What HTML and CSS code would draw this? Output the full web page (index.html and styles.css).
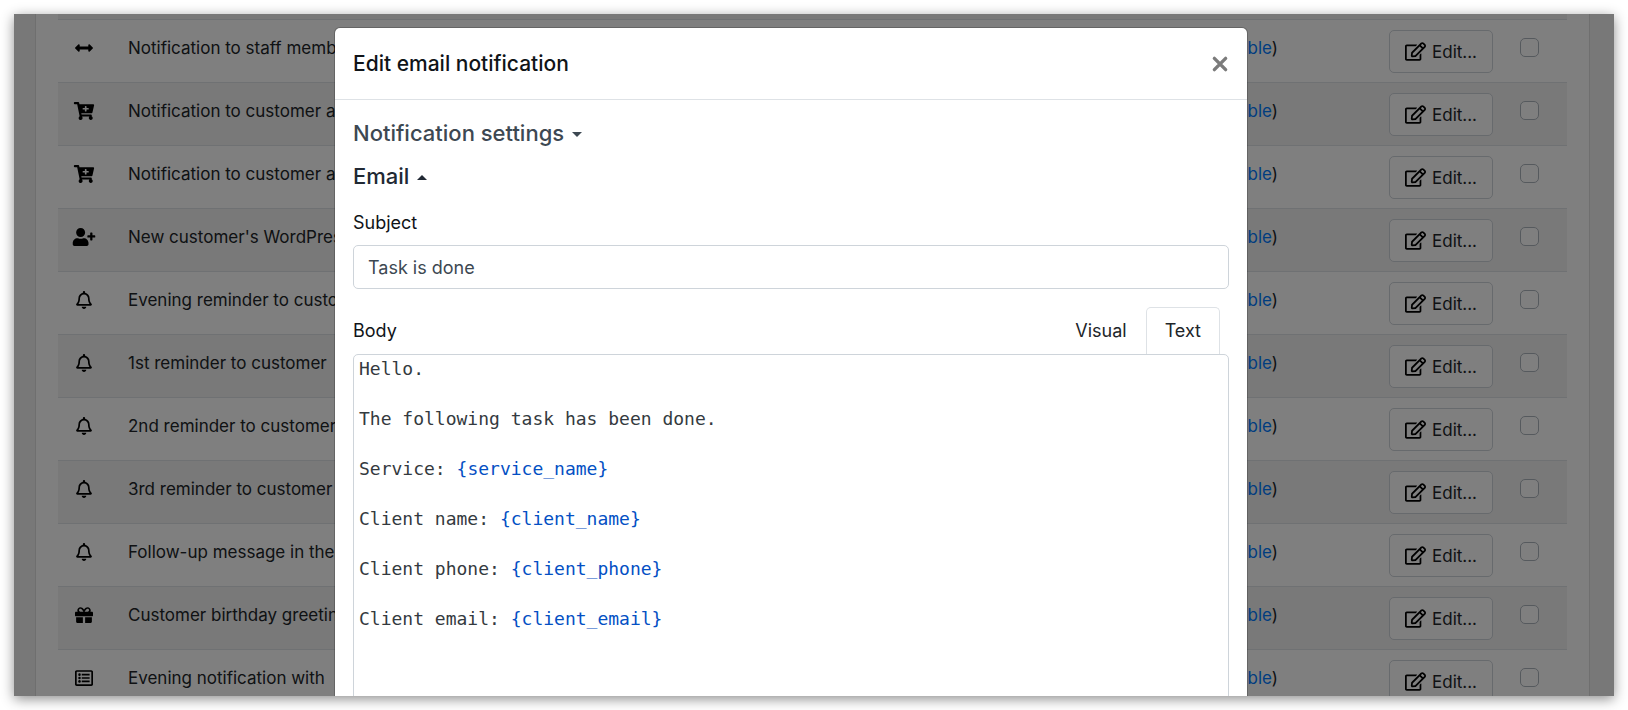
FILE: index.html
```
<!DOCTYPE html>
<html lang="en">
<head>
	<meta charset="UTF-8">
	<title>Email notifications</title>
	<link rel="stylesheet" href="styles.css">
</head>
<body>
<svg class="sprite">
	<symbol id="arrows" viewBox="0 0 512 512"><path d="M377.941 169.941V216H134.059v-46.059c0-21.382-25.851-32.09-40.971-16.971L7.029 239.029c-9.373 9.373-9.373 24.568 0 33.941l86.059 86.059c15.119 15.119 40.971 4.411 40.971-16.971V296h243.882v46.059c0 21.382 25.851 32.09 40.971 16.971l86.059-86.059c9.373-9.373 9.373-24.568 0-33.941l-86.059-86.059c-15.119-15.12-40.971-4.412-40.971 16.97z"/></symbol>
	<symbol id="cart" viewBox="0 0 576 512"><path d="M504.717 320H211.572l6.545 32h268.418c15.401 0 26.816 14.301 23.403 29.319l-5.517 24.276C523.112 414.668 536 433.828 536 456c0 31.202-25.519 56.444-56.824 55.994-29.823-.429-54.35-24.631-55.155-54.447-.44-16.287 6.085-31.049 16.803-41.548H231.176C241.553 426.165 248 440.326 248 456c0 31.813-26.528 57.431-58.67 55.938-28.54-1.325-51.751-24.385-53.251-52.917-1.158-22.034 10.436-41.455 28.051-51.586L93.883 64H24C10.745 64 0 53.255 0 40V24C0 10.745 10.745 0 24 0h102.529c11.401 0 21.228 8.021 23.513 19.19L159.208 64H551.99c15.401 0 26.816 14.301 23.403 29.319l-47.273 208C525.637 312.246 515.923 320 504.717 320zM408 168h-48v-40c0-8.837-7.163-16-16-16h-16c-8.837 0-16 7.163-16 16v40h-48c-8.837 0-16 7.163-16 16v16c0 8.837 7.163 16 16 16h48v40c0 8.837 7.163 16 16 16h16c8.837 0 16-7.163 16-16v-40h48c8.837 0 16-7.163 16-16v-16c0-8.837-7.163-16-16-16z"/></symbol>
	<symbol id="user" viewBox="0 0 640 512"><path d="M624 208h-64v-64c0-8.8-7.2-16-16-16h-32c-8.8 0-16 7.2-16 16v64h-64c-8.8 0-16 7.2-16 16v32c0 8.8 7.2 16 16 16h64v64c0 8.8 7.2 16 16 16h32c8.8 0 16-7.2 16-16v-64h64c8.8 0 16-7.2 16-16v-32c0-8.8-7.2-16-16-16zm-400 48c70.7 0 128-57.3 128-128S294.7 0 224 0 96 57.3 96 128s57.3 128 128 128zm89.6 32h-16.7c-22.2 10.2-46.9 16-72.9 16s-50.6-5.8-72.9-16h-16.7C60.2 288 0 348.2 0 422.4V464c0 26.5 21.5 48 48 48h352c26.5 0 48-21.5 48-48v-41.6c0-74.2-60.2-134.4-134.4-134.4z"/></symbol>
	<symbol id="bell" viewBox="0 0 448 512"><path d="M439.39 362.29c-19.32-20.76-55.47-51.99-55.47-154.29 0-77.7-54.48-139.9-127.94-155.16V32c0-17.67-14.32-32-31.98-32s-31.98 14.33-31.98 32v20.84C118.56 68.1 64.08 130.3 64.08 208c0 102.3-36.15 133.53-55.47 154.29-6 6.45-8.66 14.16-8.61 21.71.11 16.4 12.98 32 32.1 32h383.8c19.12 0 32-15.6 32.1-32 .05-7.55-2.61-15.27-8.61-21.71zM67.53 368c21.22-27.97 44.42-74.33 44.53-159.42 0-.2-.06-.38-.06-.58 0-61.86 50.14-112 112-112s112 50.14 112 112c0 .2-.06.38-.06.58.11 85.1 23.31 131.46 44.53 159.42H67.53zM224 512c35.32 0 63.97-28.65 63.97-64H160.03c0 35.35 28.65 64 63.97 64z"/></symbol>
	<symbol id="gift" viewBox="0 0 512 512"><path d="M32 448c0 17.7 14.3 32 32 32h160V320H32v128zm256 32h160c17.7 0 32-14.3 32-32V320H288v160zm192-320h-42.1c6.2-12.1 10.1-25.5 10.1-40 0-48.5-39.5-88-88-88-41.6 0-68.5 21.3-103 68.3-34.5-47-61.4-68.3-103-68.3-48.5 0-88 39.5-88 88 0 14.5 3.8 27.9 10.1 40H32c-17.7 0-32 14.3-32 32v80c0 8.8 7.2 16 16 16h480c8.8 0 16-7.2 16-16v-80c0-17.7-14.3-32-32-32zm-326.1 0c-22.1 0-40-17.9-40-40s17.9-40 40-40c19.9 0 34.6 3.3 86.1 80h-86.1zm206.1 0h-86.1c51.4-76.5 65.7-80 86.1-80 22.1 0 40 17.9 40 40s-17.9 40-40 40z"/></symbol>
	<symbol id="list" viewBox="0 0 512 512"><path d="M464 32H48C21.49 32 0 53.49 0 80v352c0 26.51 21.49 48 48 48h416c26.51 0 48-21.49 48-48V80c0-26.51-21.49-48-48-48zm-6 400H54a6 6 0 0 1-6-6V86a6 6 0 0 1 6-6h404a6 6 0 0 1 6 6v340a6 6 0 0 1-6 6z"/><path d="M192 136h224v48H192zM192 232h224v48H192zM192 328h224v48H192z"/><circle cx="128" cy="160" r="36"/><circle cx="128" cy="256" r="36"/><circle cx="128" cy="352" r="36"/></symbol>
	<symbol id="edit" viewBox="0 0 576 512"><path d="M402.3 344.9l32-32c5-5 13.7-1.5 13.7 5.7V464c0 26.5-21.5 48-48 48H48c-26.5 0-48-21.5-48-48V112c0-26.5 21.5-48 48-48h273.5c7.1 0 10.7 8.6 5.7 13.7l-32 32c-1.5 1.5-3.5 2.3-5.7 2.3H48v352h352V350.5c0-2.1.8-4.1 2.3-5.6zm156.6-201.8L296.3 405.7l-90.4 10c-26.2 2.9-48.5-19.2-45.6-45.6l10-90.4L432.9 17.1c22.9-22.9 59.9-22.9 82.7 0l43.2 43.2c22.9 22.9 22.9 60 .1 82.8zM460.1 174L402 115.9 216.2 301.8l-7.3 65.3 65.3-7.3L460.1 174zm64.8-79.7l-43.2-43.2c-4.1-4.1-10.8-4.1-14.8 0L436 82l58.1 58.1 30.9-30.9c4-4.2 4-10.8-.1-14.9z"/></symbol>
</svg>

<div class="screen">
	<div class="card">
		<table class="list">
			<colgroup>
				<col class="col-type">
				<col>
				<col class="col-state">
				<col class="col-action">
				<col class="col-check">
			</colgroup>
			<tbody>
			<tr class="row-cut"><td colspan="5"></td></tr>
			<tr>
				<td class="type"><svg class="icon"><use href="#arrows"/></svg></td>
				<td>Notification to staff member</td>
				<td class="state"><a href="#">disable</a>)</td>
				<td class="action"><button type="button" class="btn"><svg class="icon-edit"><use href="#edit"/></svg>Edit...</button></td>
				<td class="check"><input type="checkbox" aria-label="Select"></td>
			</tr>
			<tr>
				<td class="type"><svg class="icon"><use href="#cart"/></svg></td>
				<td>Notification to customer a</td>
				<td class="state"><a href="#">disable</a>)</td>
				<td class="action"><button type="button" class="btn"><svg class="icon-edit"><use href="#edit"/></svg>Edit...</button></td>
				<td class="check"><input type="checkbox" aria-label="Select"></td>
			</tr>
			<tr>
				<td class="type"><svg class="icon"><use href="#cart"/></svg></td>
				<td>Notification to customer a</td>
				<td class="state"><a href="#">disable</a>)</td>
				<td class="action"><button type="button" class="btn"><svg class="icon-edit"><use href="#edit"/></svg>Edit...</button></td>
				<td class="check"><input type="checkbox" aria-label="Select"></td>
			</tr>
			<tr>
				<td class="type"><svg class="icon"><use href="#user"/></svg></td>
				<td>New customer's WordPress</td>
				<td class="state"><a href="#">disable</a>)</td>
				<td class="action"><button type="button" class="btn"><svg class="icon-edit"><use href="#edit"/></svg>Edit...</button></td>
				<td class="check"><input type="checkbox" aria-label="Select"></td>
			</tr>
			<tr>
				<td class="type"><svg class="icon"><use href="#bell"/></svg></td>
				<td>Evening reminder to custom</td>
				<td class="state"><a href="#">disable</a>)</td>
				<td class="action"><button type="button" class="btn"><svg class="icon-edit"><use href="#edit"/></svg>Edit...</button></td>
				<td class="check"><input type="checkbox" aria-label="Select"></td>
			</tr>
			<tr>
				<td class="type"><svg class="icon"><use href="#bell"/></svg></td>
				<td>1st reminder to customer</td>
				<td class="state"><a href="#">disable</a>)</td>
				<td class="action"><button type="button" class="btn"><svg class="icon-edit"><use href="#edit"/></svg>Edit...</button></td>
				<td class="check"><input type="checkbox" aria-label="Select"></td>
			</tr>
			<tr>
				<td class="type"><svg class="icon"><use href="#bell"/></svg></td>
				<td>2nd reminder to customer</td>
				<td class="state"><a href="#">disable</a>)</td>
				<td class="action"><button type="button" class="btn"><svg class="icon-edit"><use href="#edit"/></svg>Edit...</button></td>
				<td class="check"><input type="checkbox" aria-label="Select"></td>
			</tr>
			<tr>
				<td class="type"><svg class="icon"><use href="#bell"/></svg></td>
				<td>3rd reminder to customer</td>
				<td class="state"><a href="#">disable</a>)</td>
				<td class="action"><button type="button" class="btn"><svg class="icon-edit"><use href="#edit"/></svg>Edit...</button></td>
				<td class="check"><input type="checkbox" aria-label="Select"></td>
			</tr>
			<tr>
				<td class="type"><svg class="icon"><use href="#bell"/></svg></td>
				<td>Follow-up message in the</td>
				<td class="state"><a href="#">disable</a>)</td>
				<td class="action"><button type="button" class="btn"><svg class="icon-edit"><use href="#edit"/></svg>Edit...</button></td>
				<td class="check"><input type="checkbox" aria-label="Select"></td>
			</tr>
			<tr>
				<td class="type"><svg class="icon"><use href="#gift"/></svg></td>
				<td>Customer birthday greeting</td>
				<td class="state"><a href="#">disable</a>)</td>
				<td class="action"><button type="button" class="btn"><svg class="icon-edit"><use href="#edit"/></svg>Edit...</button></td>
				<td class="check"><input type="checkbox" aria-label="Select"></td>
			</tr>
			<tr>
				<td class="type"><svg class="icon"><use href="#list"/></svg></td>
				<td>Evening notification with</td>
				<td class="state"><a href="#">disable</a>)</td>
				<td class="action"><button type="button" class="btn"><svg class="icon-edit"><use href="#edit"/></svg>Edit...</button></td>
				<td class="check"><input type="checkbox" aria-label="Select"></td>
			</tr>
			</tbody>
		</table>
	</div>

	<div class="backdrop">
		<div class="modal" role="dialog" aria-labelledby="modal-title">
			<div class="modal-header">
				<h5 id="modal-title">Edit email notification</h5>
				<button type="button" class="close" aria-label="Close"><svg viewBox="0 0 16 16"><path d="M3 3l10 10M13 3L3 13"/></svg></button>
			</div>
			<form class="modal-body">
				<button type="button" class="toggle">Notification settings<span class="caret"></span></button>
				<button type="button" class="toggle open">Email<span class="caret"></span></button>
				<label class="label" for="subject">Subject</label>
				<input type="text" id="subject" class="control" value="Task is done">
				<div class="body-head">
					<span class="label" id="body-label">Body</span>
					<div class="tabs">
						<button type="button" class="tab">Visual</button>
						<button type="button" class="tab active">Text</button>
					</div>
				</div>
				<!-- div and not textarea, the codes are highlighted -->
				<div class="editor" contenteditable="true" spellcheck="false" role="textbox" aria-multiline="true" aria-labelledby="body-label">Hello.

The following task has been done.

Service: <span class="code">{service_name}</span>

Client name: <span class="code">{client_name}</span>

Client phone: <span class="code">{client_phone}</span>

Client email: <span class="code">{client_email}</span></div>
			</form>
		</div>
	</div>
</div>
</body>
</html>
```
FILE: styles.css
```
* {
  box-sizing: border-box;
}
body {
  margin: 0;
  padding: 14px;
  height: 100vh;
  background: #fff;
  color: #212529;
  font: 18px/28px Inter, "Liberation Sans", sans-serif;
}
button, input {
  font: inherit;
  color: inherit;
}
.sprite {
  position: absolute;
  width: 0;
  height: 0;
}
.screen {
  position: relative;
  height: 100%;
  overflow: hidden;
  background: #f0f0f1;
  box-shadow: 0 3px 12px rgba(0,0,0,.45);
}

/* list */
.card {
  margin: 0 24px 0 21px;
  padding: 0 22px;
  border: 1px solid #dfdfdf;
  border-width: 0 1px;
  background: #fff;
}
.list {
  width: 100%;
  border-spacing: 0;
  table-layout: fixed;
}
.col-type {
  width: 70px;
}
.col-state {
  width: 100px;
}
.col-action {
  width: 215px;
}
.col-check {
  width: 74px;
}
.list tr:nth-child(odd) {
  background: #f2f2f2;
}
.list td {
  height: 63px;
  padding: 14px 0;
  border-bottom: 1px solid #dee2e6;
  font-size: 17px;
  vertical-align: top;
  white-space: nowrap;
}
.list .row-cut td {
  height: 6px;
  padding: 0;
}
.list .type {
  padding-left: 13px;
}
.list .state {
  text-align: right;
}
.list .action {
  padding: 10px 0 9px;
  text-align: right;
}
.list .check {
  padding: 18px 28px 0 0;
  text-align: right;
}
.list a {
  color: #007bff;
  text-decoration: none;
}
.icon {
  display: block;
  width: 26px;
  height: 18px;
  margin-top: 5px;
}
.btn {
  display: inline-flex;
  align-items: center;
  gap: 6px;
  height: 43px;
  padding: 0 15px;
  border: 1px solid #ced4da;
  border-radius: 5px;
  background: #fff;
  vertical-align: top;
}
.icon-edit {
  width: 21px;
  height: 19px;
}
.check input {
  display: inline-block;
  appearance: none;
  width: 19px;
  height: 19px;
  margin: 0;
  border: 1px solid #adb5bd;
  border-radius: 5px;
  background: #fff;
  vertical-align: top;
}

/* modal */
.backdrop {
  position: absolute;
  top: 0;
  right: 0;
  bottom: 0;
  left: 0;
  padding: 13px 366px 0 320px;
  background: rgba(0,0,0,.5);
}
.modal {
  border: 1px solid rgba(0,0,0,.2);
  border-radius: 6px;
  background: #fff;
  background-clip: padding-box;
}
.modal-header {
  display: flex;
  align-items: center;
  justify-content: space-between;
  height: 72px;
  padding: 0 18px;
  border-bottom: 1px solid #dee2e6;
}
.modal-header h5 {
  margin: 0;
  color: #101418;
  font-size: 21px;
  font-weight: 500;
}
.close {
  width: 18px;
  height: 18px;
  padding: 0;
  border: 0;
  background: none;
}
.close svg {
  display: block;
  fill: none;
  stroke: #7b7b7b;
  stroke-width: 3;
  stroke-linecap: round;
}
.modal-body {
  padding: 18px;
}
.toggle {
  display: flex;
  align-items: center;
  gap: 8px;
  margin-bottom: 13px;
  padding: 0;
  border: 0;
  background: none;
  color: #3d4852;
  font-size: 22px;
  font-weight: 500;
  line-height: 30px;
}
.toggle.open {
  margin-bottom: 18px;
  color: #212934;
}
.caret {
  margin-top: 3px;
  border: 5px solid transparent;
  border-top-color: currentColor;
  border-bottom: 0;
}
.open .caret {
  border-top: 0;
  border-bottom: 5px solid currentColor;
}
.label {
  display: block;
  color: #101418;
}
.control {
  display: block;
  width: 100%;
  height: 44px;
  margin-top: 8px;
  padding: 0 14px;
  border: 1px solid #ced4da;
  border-radius: 5px;
  background: #fff;
  color: #3d4852;
}
.body-head {
  display: flex;
  align-items: center;
  justify-content: space-between;
  margin-top: 18px;
}
.tabs {
  display: flex;
  padding-right: 9px;
}
.tab {
  height: 47px;
  padding: 0 18px;
  border: 1px solid transparent;
  border-bottom: 0;
  border-radius: 5px 5px 0 0;
  background: none;
}
.tab.active {
  border-color: #dee2e6;
}
.editor {
  min-height: 400px;
  padding: 1px 5px;
  border: 1px solid #ced4da;
  border-radius: 5px;
  color: #343a40;
  font: 18px/25px "DejaVu Sans Mono", "Liberation Mono", monospace;
  white-space: pre-wrap;
  outline: 0;
}
.code {
  color: #0450c4;
}
```
